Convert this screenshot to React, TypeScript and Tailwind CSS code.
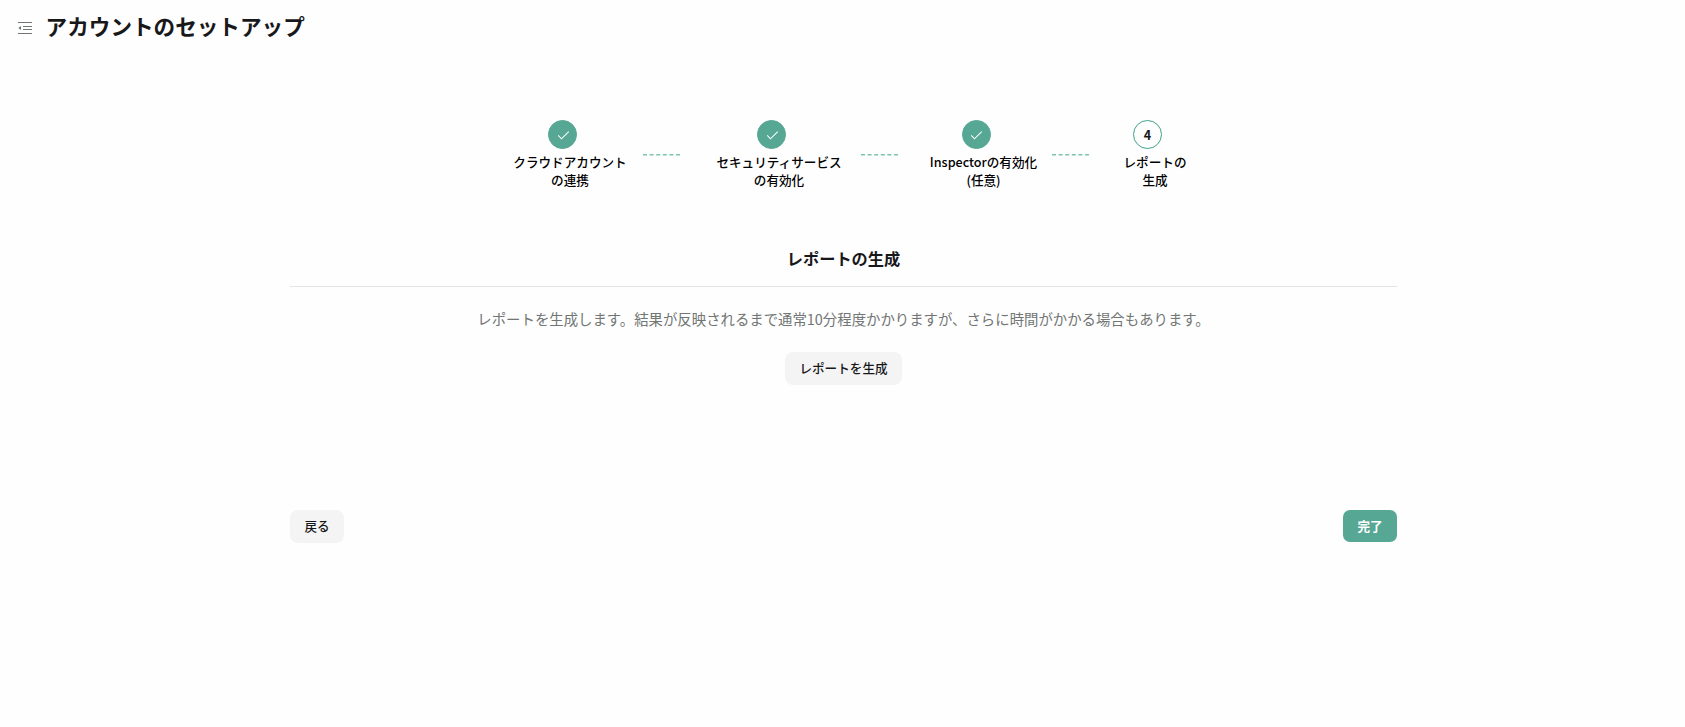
type Step = {
  title: string[];
  done: boolean;
  box: string;
  line?: string;
};

const steps: Step[] = [
  { title: ["クラウドアカウント", "の連携"], done: true, box: "w-[114px]", line: "ml-4 mr-9" },
  { title: ["セキュリティサービス", "の有効化"], done: true, box: "w-[126px]", line: "ml-[19px] mr-[31.5px]" },
  { title: ["Inspectorの有効化", "(任意)"], done: true, box: "w-[108px]", line: "ml-[14.5px] mr-[34.5px]" },
  { title: ["レポートの", "生成"], done: false, box: "w-[63px]" },
];

function MenuFold() {
  return (
    <svg className="h-4 w-4 text-[#717573]" viewBox="0 0 16 16" fill="none" stroke="currentColor">
      <path d="M1 2.5h14M6 6.5h9M6 9.5h9M1 13.5h14" />
      <path d="M4 6v4L1.3 8z" fill="currentColor" stroke="none" />
    </svg>
  );
}

function Check() {
  return (
    <svg className="h-[14px] w-[14px]" viewBox="0 0 24 24" fill="none" stroke="currentColor" strokeWidth="1.8">
      <path d="M3.8 12.6 9.4 18.5 21.8 6.3" />
    </svg>
  );
}

function DashedLine() {
  return (
    <svg className="block h-0.5 w-[37px]" viewBox="0 0 37 2">
      <path d="M0 .7h37" stroke="#7cc4b0" strokeWidth="1.4" strokeDasharray="4 2.6" />
    </svg>
  );
}

function StepItem({ step, index }: { step: Step; index: number }) {
  return (
    <>
      <div className={`flex flex-col items-center ${step.box}`}>
        <div
          className={`mr-[15px] flex h-[29px] w-[29px] items-center justify-center rounded-full border pt-px text-[12.6px] ${
            step.done ? "border-[#56a794] bg-[#56a794] text-white" : "border-[#44a08b] font-bold text-[#18181b]"
          }`}
        >
          {step.done ? <Check /> : index + 1}
        </div>
        <p className="mt-1 text-center text-[12.6px] leading-[18px] font-medium whitespace-nowrap text-black">
          {step.title[0]}
          <br />
          {step.title[1]}
        </p>
      </div>
      {step.line && (
        <div className={`mt-[34px] ${step.line}`}>
          <DashedLine />
        </div>
      )}
    </>
  );
}

export default function App() {
  return (
    <main lang="ja" className="min-h-screen bg-[#fefefe] font-['Noto_Sans_CJK_JP',sans-serif]">
      <header className="flex h-[54px] items-start pl-[17px]">
        <button className="mt-5">
          <MenuFold />
        </button>
        <h1 className="mt-[11px] ml-[12.6px] text-[21.6px] leading-[29px] font-bold text-[#18181b]">
          アカウントのセットアップ
        </h1>
      </header>

      <div className="mx-auto w-[1109px] pl-0.5">
        <div className="flex items-start pt-[66px] pl-[223px]">
          {steps.map((step, i) => (
            <StepItem key={i} step={step} index={i} />
          ))}
        </div>

        {/* Report section */}
        <section className="mt-14 flex flex-col items-center">
          <h2 className="w-full border-b border-[#e4e4e4] pt-px pb-[15px] text-center text-[16.2px] leading-[25px] font-bold text-[#18181b]">
            レポートの生成
          </h2>
          <p className="mt-[21px] text-[14.4px] leading-[22px] text-[#717573]">
            レポートを生成します。結果が反映されるまで通常10分程度かかりますが、さらに時間がかかる場合もあります。
          </p>
          <button className="mt-[22px] h-[33px] rounded-[8px] bg-[#f4f4f4] px-[14.4px] pb-px text-[12.6px] leading-[18px] font-medium text-[#18181b]">
            レポートを生成
          </button>
        </section>

        <div className="mt-[125px] flex items-start justify-between">
          <button className="h-[33px] rounded-[8px] bg-[#f4f4f4] px-[14.4px] pb-px text-[12.6px] leading-[18px] font-medium text-[#18181b]">
            戻る
          </button>
          <button className="h-8 rounded-[7px] bg-[#56a794] px-[14.4px] text-[12.6px] leading-[18px] font-bold text-white">
            完了
          </button>
        </div>
      </div>
    </main>
  );
}
